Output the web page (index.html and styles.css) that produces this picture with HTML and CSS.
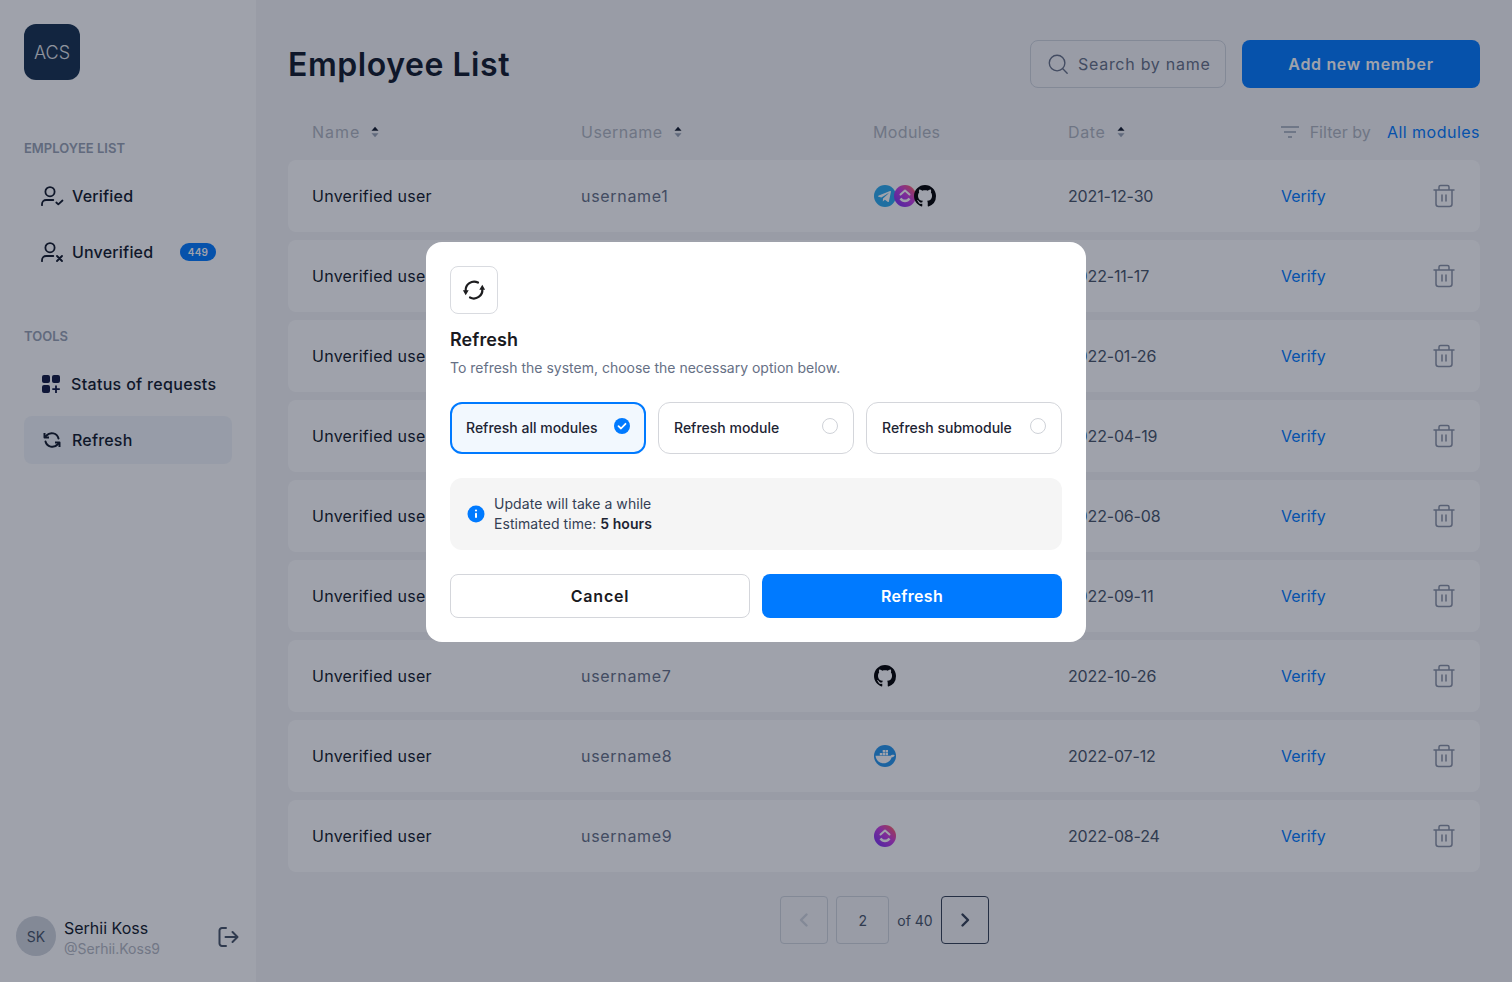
FILE: index.html
```html
<!DOCTYPE html>
<html lang="en">
<head>
<meta charset="utf-8">
<title>Employee List</title>
<link rel="stylesheet" href="styles.css">
</head>
<body>
<svg class="sprites" width="0" height="0" aria-hidden="true">
  <defs>
    <linearGradient id="cu" x1="0" y1="1" x2="1" y2="0">
      <stop offset="0" stop-color="#6a2ff7"/><stop offset=".55" stop-color="#c93ce0"/><stop offset=".8" stop-color="#f0508f"/><stop offset="1" stop-color="#ffb02e"/>
    </linearGradient>
    <symbol id="i-telegram" viewBox="0 0 22 22">
      <circle cx="11" cy="11" r="11" fill="#2aabee"/>
      <path d="M4.200 10.800 16 6.100c.6-.2 1.100.1.900.9l-2 9.400c-.1.600-.5.800-1 .5l-3-2.200-1.500 1.400c-.2.200-.3.300-.6.300l.2-3 5.500-5c.2-.2 0-.3-.3-.1l-6.800 4.300-2.900-.9c-.6-.2-.6-.6.100-.9z" fill="#fff"/>
    </symbol>
    <symbol id="i-clickup" viewBox="0 0 22 22">
      <circle cx="11" cy="11" r="11" fill="url(#cu)"/>
      <path d="M6.500 9.500 11 5.500l4.500 4" fill="none" stroke="#fff" stroke-width="2" stroke-linecap="round" stroke-linejoin="round"/>
      <path d="M5.500 14.200 7.500 12.700c1 1.300 2.100 1.900 3.500 1.900s2.500-.6 3.500-1.900l2 1.500c-1.400 1.900-3.300 3-5.500 3s-4.100-1.100-5.500-3z" fill="#fff"/>
    </symbol>
    <symbol id="i-github" viewBox="0 0 16 16">
      <path fill="#000" d="M8 0C3.580 0 0 3.580 0 8c0 3.540 2.290 6.530 5.470 7.590.4.070.55-.17.55-.38 0-.19-.01-.82-.01-1.490-2.010.37-2.530-.49-2.690-.94-.09-.23-.48-.94-.82-1.130-.28-.15-.68-.52-.01-.53.63-.01 1.080.58 1.230.82.72 1.210 1.870.87 2.330.66.07-.52.28-.87.51-1.070-1.780-.2-3.640-.89-3.640-3.950 0-.87.31-1.590.82-2.150-.08-.2-.36-1.020.08-2.120 0 0 .67-.21 2.200.82.64-.18 1.320-.27 2-.27.68 0 1.360.09 2 .27 1.530-1.040 2.200-.82 2.200-.82.44 1.100.16 1.920.08 2.120.51.56.82 1.270.82 2.150 0 3.070-1.870 3.750-3.650 3.950.29.25.54.73.54 1.480 0 1.070-.01 1.930-.01 2.200 0 .21.15.46.55.38A8.013 8.013 0 0 0 16 8c0-4.420-3.580-8-8-8z"/>
    </symbol>
    <symbol id="i-docker" viewBox="0 0 22 22">
      <circle cx="11" cy="11" r="11" fill="#2496ed"/>
      <path d="M1.500 10.800H16.600c.5-1 1.500-1.300 2.900-1 .6.100 1.100.3 1.200.5-.6 1.400-1.700 2-3 2-1.200 3.500-4 6-8 6-4.500 0-7.700-3-8.200-7.500z" fill="#fff"/>
      <path d="M5.800 7.900h2.400v2.400H5.800zM8.700 7.900h2.400v2.400H8.700zM11.600 7.900H14v2.400h-2.400zM8.700 5h2.400v2.400H8.700zM11.600 5H14v2.400h-2.400z" fill="#fff"/>
    </symbol>
    <symbol id="i-trash" viewBox="0 0 24 24">
      <path d="M2 6h20M7 6V3a1.500 1.500 0 0 1 1.500-1.500h7A1.500 1.500 0 0 1 17 3v3M4 6v14a2.500 2.500 0 0 0 2.500 2.500h11A2.500 2.500 0 0 0 20 20V6M10 11v6M14 11v6" fill="none" stroke="currentColor" stroke-width="1.500" stroke-linecap="round" stroke-linejoin="round"/>
    </symbol>
    <symbol id="i-sort" viewBox="0 0 8 12">
      <path d="M4 .8 7.500 4.800H.5z" fill="#101828"/>
      <path d="M4 11.200.5 7.200h7z" fill="#98a2b3"/>
    </symbol>
    <symbol id="i-user" viewBox="0 0 24 24">
      <circle cx="10" cy="7.700" r="4.600" fill="none" stroke="currentColor" stroke-width="1.800"/>
      <path d="M2 21.200v-1A4.200 4.200 0 0 1 6.200 16H13.300" fill="none" stroke="currentColor" stroke-width="1.800" stroke-linecap="round"/>
    </symbol>
  </defs>
</svg>

<div class="app">
  <aside class="sidebar">
    <div class="logo">ACS</div>
    <div class="nav-label nav-label-first">EMPLOYEE LIST</div>
    <nav class="nav-group">
      <a class="nav-item">
        <svg class="nav-icon" viewBox="0 0 24 24"><use href="#i-user"/><path d="M16.300 18.500 18.300 20.300 22.500 16.500" fill="none" stroke="currentColor" stroke-width="1.800" stroke-linecap="round" stroke-linejoin="round"/></svg>
        <span>Verified</span>
      </a>
      <a class="nav-item">
        <svg class="nav-icon" viewBox="0 0 24 24"><use href="#i-user"/><path d="M17 16 22 21M22 16 17 21" fill="none" stroke="currentColor" stroke-width="1.900" stroke-linecap="round"/></svg>
        <span>Unverified</span>
        <span class="badge">449</span>
      </a>
    </nav>
    <div class="nav-label nav-label-second">TOOLS</div>
    <nav class="nav-group">
      <a class="nav-item nav-item-tight">
        <svg class="nav-icon" viewBox="0 0 24 24"><rect x="2" y="3" width="8" height="8" rx="2" fill="#101840"/><rect x="12" y="3" width="8" height="8" rx="2" fill="#101840"/><rect x="2" y="13" width="8" height="8" rx="2" fill="#101840"/><path d="M16 13.500v7.500M12.300 17.200h7.500" stroke="#101840" stroke-width="1.800"/></svg>
        <span class="status-label">Status of requests</span>
      </a>
      <a class="nav-item nav-item-active">
        <svg class="nav-icon" viewBox="0 0 24 24"><g transform="matrix(-1 0 0 1 24 0)"><path d="M5.500 10.500A7 7 0 0 1 17.500 7.500L19 9M18.500 13.500A7 7 0 0 1 6.500 16.500L5 15" fill="none" stroke="currentColor" stroke-width="2" stroke-linecap="round"/><path d="M19.500 5v4.500H15M4.500 19v-4.500H9" fill="none" stroke="currentColor" stroke-width="2" stroke-linejoin="round"/></g></svg>
        <span>Refresh</span>
      </a>
    </nav>
    <div class="profile">
      <div class="avatar">SK</div>
      <div class="profile-text">
        <div class="profile-name">Serhii Koss</div>
        <div class="profile-handle">@Serhii.Koss9</div>
      </div>
      <svg class="logout" viewBox="0 0 24 24"><path d="M10 3H6a2.500 2.500 0 0 0-2.500 2.500v13A2.500 2.500 0 0 0 6 21h4M9.500 12H21M16.500 7l5 5-5 5" fill="none" stroke="currentColor" stroke-width="2" stroke-linecap="round" stroke-linejoin="round"/></svg>
    </div>
  </aside>

  <main class="main">
    <header class="topbar">
      <h1 class="title">Employee List</h1>
      <div class="search">
        <svg class="search-icon" viewBox="0 0 24 24"><circle cx="11" cy="11" r="8.500" fill="none" stroke="currentColor" stroke-width="1.500"/><path d="M17.500 17.500 22 22" stroke="currentColor" stroke-width="1.500" stroke-linecap="round"/></svg>
        <span>Search by name</span>
      </div>
      <button class="add-btn">Add new member</button>
    </header>

    <div class="table-head grid-cols">
      <div class="head-cell head-name">Name <svg class="sort"><use href="#i-sort"/></svg></div>
      <div class="head-cell head-user">Username <svg class="sort"><use href="#i-sort"/></svg></div>
      <div class="head-cell head-plain">Modules</div>
      <div class="head-cell head-date">Date <svg class="sort"><use href="#i-sort"/></svg></div>
      <div class="head-filter">
        <svg class="filter-icon" viewBox="0 0 18 12"><path d="M0 1h18M3 6h12M7 11h4" stroke="currentColor" stroke-width="1.500"/></svg>
        <span class="filter-label">Filter by</span>
        <span class="filter-value">All modules</span>
      </div>
    </div>

    <div class="rows">
      <div class="row grid-cols"><span class="name">Unverified user</span><span class="muted">username1</span><span class="mods"><svg class="mod"><use href="#i-telegram"/></svg><svg class="mod"><use href="#i-clickup"/></svg><svg class="mod"><use href="#i-github"/></svg></span><span class="date">2021-12-30</span><a class="verify">Verify</a><svg class="trash"><use href="#i-trash"/></svg></div>
      <div class="row grid-cols"><span class="name">Unverified user</span><span class="muted">username2</span><span class="mods"><svg class="mod"><use href="#i-github"/></svg></span><span class="date">2022-11-17</span><a class="verify">Verify</a><svg class="trash"><use href="#i-trash"/></svg></div>
      <div class="row grid-cols"><span class="name">Unverified user</span><span class="muted">username3</span><span class="mods"><svg class="mod"><use href="#i-docker"/></svg></span><span class="date">2022-01-26</span><a class="verify">Verify</a><svg class="trash"><use href="#i-trash"/></svg></div>
      <div class="row grid-cols"><span class="name">Unverified user</span><span class="muted">username4</span><span class="mods"><svg class="mod"><use href="#i-clickup"/></svg></span><span class="date">2022-04-19</span><a class="verify">Verify</a><svg class="trash"><use href="#i-trash"/></svg></div>
      <div class="row grid-cols"><span class="name">Unverified user</span><span class="muted">username5</span><span class="mods"><svg class="mod"><use href="#i-telegram"/></svg></span><span class="date">2022-06-08</span><a class="verify">Verify</a><svg class="trash"><use href="#i-trash"/></svg></div>
      <div class="row grid-cols"><span class="name">Unverified user</span><span class="muted">username6</span><span class="mods"><svg class="mod"><use href="#i-github"/></svg></span><span class="date">2022-09-11</span><a class="verify">Verify</a><svg class="trash"><use href="#i-trash"/></svg></div>
      <div class="row grid-cols"><span class="name">Unverified user</span><span class="muted">username7</span><span class="mods"><svg class="mod"><use href="#i-github"/></svg></span><span class="date">2022-10-26</span><a class="verify">Verify</a><svg class="trash"><use href="#i-trash"/></svg></div>
      <div class="row grid-cols"><span class="name">Unverified user</span><span class="muted">username8</span><span class="mods"><svg class="mod"><use href="#i-docker"/></svg></span><span class="date">2022-07-12</span><a class="verify">Verify</a><svg class="trash"><use href="#i-trash"/></svg></div>
      <div class="row grid-cols"><span class="name">Unverified user</span><span class="muted">username9</span><span class="mods"><svg class="mod"><use href="#i-clickup"/></svg></span><span class="date">2022-08-24</span><a class="verify">Verify</a><svg class="trash"><use href="#i-trash"/></svg></div>
    </div>

    <div class="pager">
      <button class="page-btn page-disabled"><svg class="chev" viewBox="0 0 24 24"><path d="M14.500 6.500 9 12l5.500 5.500" fill="none" stroke="currentColor" stroke-width="2.400" stroke-linecap="round" stroke-linejoin="round"/></svg></button>
      <div class="page-num">2</div>
      <span class="page-of">of 40</span>
      <button class="page-btn page-next"><svg class="chev" viewBox="0 0 24 24"><path d="M9.500 6.500 15 12l-5.500 5.500" fill="none" stroke="currentColor" stroke-width="2.400" stroke-linecap="round" stroke-linejoin="round"/></svg></button>
    </div>
  </main>
</div>

<div class="overlay">
  <section class="modal">
    <div class="modal-icon">
      <svg viewBox="0 0 24 24" class="modal-icon-svg"><path d="M16 4.600A8.500 8.500 0 0 0 3.700 13M8 19.500A8.500 8.500 0 0 0 20.300 11" fill="none" stroke="#1d1d1f" stroke-width="2.200" stroke-linecap="round"/><path d="M.9 12.300H6.700L3.700 17.200zM17.300 11.700H23.100L20.300 6.800z" fill="#1d1d1f"/></svg>
    </div>
    <h2 class="modal-title">Refresh</h2>
    <p class="modal-desc">To refresh the system, choose the necessary option below.</p>
    <div class="options">
      <div class="option option-on">
        <span>Refresh all modules</span>
        <svg class="opt-mark" viewBox="0 0 16 16"><circle cx="8" cy="8" r="8" fill="#007aff"/><path d="M4.500 8.200 7 10.500 11.500 5.800" fill="none" stroke="#fff" stroke-width="1.800" stroke-linecap="round" stroke-linejoin="round"/></svg>
      </div>
      <div class="option">
        <span>Refresh module</span>
        <span class="radio"></span>
      </div>
      <div class="option">
        <span>Refresh submodule</span>
        <span class="radio"></span>
      </div>
    </div>
    <div class="info">
      <svg class="info-icon" viewBox="0 0 20 20"><circle cx="10" cy="10" r="8.500" fill="#007aff"/><circle cx="10" cy="6.500" r="1.100" fill="#fff"/><rect x="9" y="8.800" width="2" height="5.200" rx="1" fill="#fff"/></svg>
      <div class="info-text">
        <div>Update will take a while</div>
        <div>Estimated time: <b>5 hours</b></div>
      </div>
    </div>
    <div class="modal-actions">
      <button class="btn-cancel">Cancel</button>
      <button class="btn-refresh">Refresh</button>
    </div>
  </section>
</div>
</body>
</html>
```

FILE: styles.css
```css
* { box-sizing: border-box; }
html, body { margin: 0; height: 982px; overflow: hidden; }
body {
  font-family: "Inter", "Liberation Sans", sans-serif;
  color: #101828;
  background: #f5f5f7;
  position: relative;
}
.sprites { position: absolute; }
button { font: inherit; cursor: pointer; }

.app { display: flex; height: 982px; }

/* sidebar */
.sidebar {
  width: 256px;
  flex: none;
  background: #fff;
  display: flex;
  flex-direction: column;
  padding: 24px 24px 23px;
}
.logo {
  width: 56px; height: 56px;
  border-radius: 12px;
  background: #14304d;
  color: #e4e6ea;
  display: flex; align-items: center; justify-content: center;
  font-size: 18px;
  font-weight: 300;
}
.nav-label {
  font-size: 13px;
  line-height: 16px;
  font-weight: 600;
  color: #98a2b3;
}
.nav-label-first { margin-top: 60px; margin-bottom: 16px; }
.nav-label-second { margin-top: 52px; margin-bottom: 16px; }
.nav-group { display: flex; flex-direction: column; gap: 8px; }
.nav-item {
  height: 48px;
  display: flex;
  align-items: center;
  gap: 8px;
  padding: 0 16px;
  border-radius: 8px;
  font-size: 16px;
  font-weight: 500;
  letter-spacing: .012em;
  color: #101828;
}
.nav-item-tight { gap: 7px; }
.status-label { white-space: nowrap; letter-spacing: .02em; }
.nav-item-active { background: #f2f6fa; }
.nav-icon { width: 24px; height: 24px; flex: none; color: #101828; }
.badge {
  margin-left: auto;
  width: 36px; height: 18px;
  border-radius: 9px;
  background: #007aff;
  color: #fff;
  font-size: 10px;
  font-weight: 600;
  display: flex; align-items: center; justify-content: center;
}
.profile {
  margin-top: auto;
  margin-left: -8px;
  display: flex;
  align-items: center;
  gap: 8px;
}
.avatar {
  width: 40px; height: 40px;
  border-radius: 50%;
  background: #d0d5dd;
  color: #475467;
  font-size: 14px;
  display: flex; align-items: center; justify-content: center;
}
.profile-text { flex: 1; padding-top: 4px; }
.profile-name { font-size: 16px; line-height: 22px; color: #101828; }
.profile-handle { font-size: 14px; line-height: 20px; color: #b4b8c2; }
.logout { width: 24px; height: 24px; color: #475467; margin: 2px -8px 0 0; flex: none; }

/* main */
.main { flex: 1; padding: 40px 32px 0; min-width: 0; }
.topbar { display: flex; align-items: center; height: 48px; }
.title {
  margin: 0 auto 0 0;
  font-size: 32px;
  font-weight: 600;
  letter-spacing: .017em;
  color: #101828;
}
.search {
  width: 196px; height: 48px;
  border: 1px solid #d0d5dd;
  border-radius: 8px;
  display: flex; align-items: center;
  gap: 9px;
  padding-left: 16px;
  font-size: 16px;
  letter-spacing: .045em;
  color: #667085;
  white-space: nowrap;
}
.search-icon { width: 22px; height: 22px; flex: none; color: #667085; }
.add-btn {
  width: 238px; height: 48px;
  margin-left: 16px;
  border: 0;
  border-radius: 8px;
  background: #007aff;
  color: #fff;
  font-size: 16px;
  font-weight: 600;
  letter-spacing: .042em;
}

.grid-cols {
  display: grid;
  grid-template-columns: 269px 292px 195px 213px 1fr;
  align-items: center;
  padding-left: 24px;
}
.table-head {
  height: 56px;
  margin-top: 16px;
  font-size: 16px;
  color: #b0b5bf;
}
.head-cell { display: flex; align-items: center; gap: 11px; }
.head-name { letter-spacing: .06em; }
.head-user { letter-spacing: .03em; }
.head-date { letter-spacing: .04em; }
.head-plain { letter-spacing: .022em; }
.sort { width: 8px; height: 12px; }
.head-filter { display: flex; align-items: center; justify-content: flex-end; white-space: nowrap; }
.filter-icon { width: 18px; height: 12px; color: #98a2b3; flex: none; margin-left: -1px; }
.filter-label { margin-left: 11px; letter-spacing: .003em; }
.filter-value { margin-left: 16px; color: #007aff; letter-spacing: .03em; }

.rows { display: flex; flex-direction: column; gap: 8px; }
.row {
  height: 72px;
  background: #fff;
  border-radius: 8px;
  font-size: 16px;
  grid-template-columns: 269px 292px 195px 213px 1fr 24px;
  padding-right: 24px;
}
.name { letter-spacing: .016em; }
.muted { color: #667085; letter-spacing: .043em; }
.date { color: #475467; letter-spacing: -.01em; }
.mods { display: flex; align-items: center; padding-left: 1px; }
.mod { width: 22px; height: 22px; margin-right: -2px; display: block; }
.verify { color: #007aff; }
.trash { width: 24px; height: 24px; color: #8a93a5; }

.pager {
  margin-top: 24px;
  padding-left: 1px;
  display: flex;
  justify-content: center;
  align-items: center;
  gap: 8px;
  font-size: 14px;
  color: #475467;
}
.page-btn {
  width: 48px; height: 48px;
  background: none;
  border: 1px solid #d0d5dd;
  border-radius: 4px;
  display: flex; align-items: center; justify-content: center;
  padding: 0;
}
.page-disabled { color: #d0d5dd; }
.page-next { border-color: #344054; color: #344054; }
.chev { width: 24px; height: 24px; }
.page-num {
  width: 53px; height: 48px;
  border: 1px solid #d0d5dd;
  border-radius: 4px;
  display: flex; align-items: center; justify-content: center;
}

/* modal */
.overlay {
  position: absolute;
  inset: 0;
  background: rgba(15, 22, 45, .4);
  display: flex;
  justify-content: center;
  align-items: flex-start;
  padding-top: 242px;
}
.modal {
  width: 660px;
  height: 400px;
  background: #fff;
  border-radius: 16px;
  padding: 24px;
  display: flex;
  flex-direction: column;
}
.modal-icon {
  width: 48px; height: 48px;
  border: 1px solid #d9dbe0;
  border-radius: 8px;
  display: flex; align-items: center; justify-content: center;
}
.modal-icon-svg { width: 24px; height: 24px; }
.modal-title {
  margin: 13px 0 0;
  font-size: 18px;
  line-height: 26px;
  font-weight: 600;
  letter-spacing: .005em;
  color: #1a1a1f;
}
.modal-desc {
  margin: 5px 0 0;
  font-size: 14px;
  line-height: 20px;
  color: #667085;
}
.options { display: flex; gap: 12px; margin-top: 24px; }
.option {
  flex: 1;
  height: 52px;
  border: 1px solid #d4d6db;
  border-radius: 12px;
  display: flex; align-items: center; justify-content: space-between;
  padding: 0 15px 1px;
  font-size: 14px;
  font-weight: 500;
  color: #1d2433;
}
.option-on {
  flex: none;
  width: 196px;
  border: 2px solid #007aff;
  background: #f2f8fe;
  padding: 0 14px 1px;
}
.opt-mark { width: 16px; height: 16px; margin-bottom: 4px; }
.radio {
  width: 16px; height: 16px;
  border: 1px solid #cfd2d8;
  border-radius: 50%;
  margin-bottom: 4px;
}
.info {
  margin-top: 24px;
  height: 72px;
  background: #f5f5f5;
  border-radius: 12px;
  padding: 0 16px;
  display: flex; align-items: center; gap: 8px;
}
.info-icon { width: 20px; height: 20px; flex: none; }
.info-text { font-size: 14px; line-height: 20px; letter-spacing: .004em; color: #344054; }
.info-text b { font-weight: 600; color: #1d2433; }
.modal-actions { display: flex; gap: 12px; margin-top: 24px; }
.btn-cancel, .btn-refresh {
  flex: none;
  width: 300px;
  height: 44px;
  border-radius: 8px;
  font-size: 16px;
  font-weight: 600;
}
.btn-cancel { background: #fff; border: 1px solid #d4d6db; color: #1a1a1f; letter-spacing: .05em; }
.btn-refresh { background: #007aff; border: 0; color: #fff; letter-spacing: .02em; }
```
